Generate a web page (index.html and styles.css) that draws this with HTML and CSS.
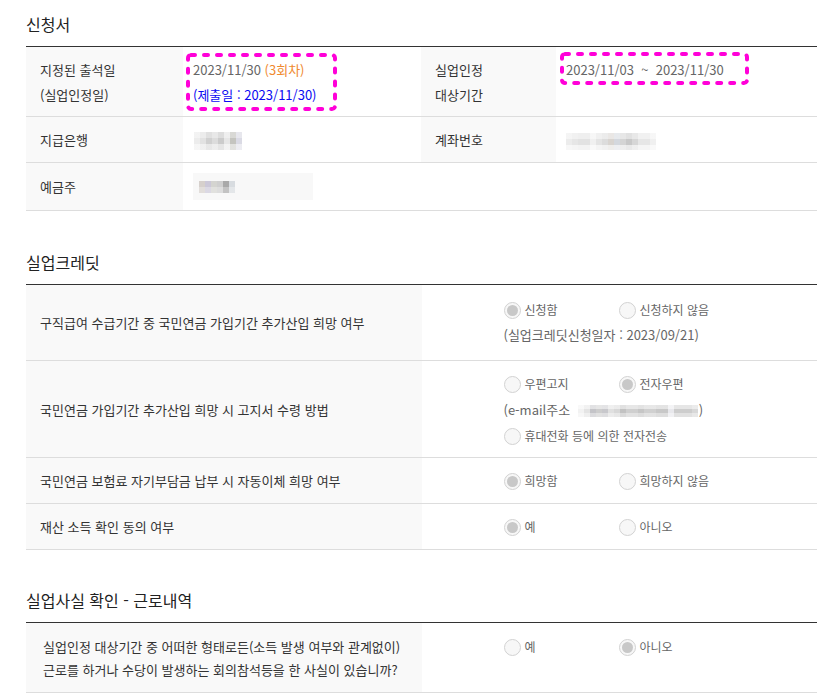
FILE: index.html
```html
<!DOCTYPE html>
<html lang="ko">
<head>
<meta charset="utf-8">
<title>신청서</title>
<link rel="stylesheet" href="styles.css">
</head>
<body>
<div class="page">
  <section class="sec">
    <h2 class="sec-title">신청서</h2>
    <table class="tbl tbl-info">
      <colgroup><col class="c-th1"><col class="c-td1"><col class="c-th2"><col class="c-td2"></colgroup>
      <tr class="row-top">
        <th>지정된 출석일<br>(실업인정일)</th>
        <td class="mark-cell">
          <div>2023/11/30 <span class="orange">(3회차)</span></div>
          <div class="blue">(제출일 : 2023/11/30)</div>
          <svg class="mark mark1" width="151" height="58" viewBox="0 0 151 58"><rect x="2" y="2" width="147" height="54" rx="3" fill="none" stroke="#ff00d8" stroke-width="4" stroke-linecap="round" stroke-dasharray="4 9"/></svg>
        </td>
        <th>실업인정<br>대상기간</th>
        <td class="mark-cell">
          <div>2023/11/03 &nbsp;~&nbsp; 2023/11/30</div>
          <svg class="mark mark2" width="189" height="33" viewBox="0 0 189 33"><rect x="2" y="2" width="185" height="29" rx="3" fill="none" stroke="#ff00d8" stroke-width="4" stroke-linecap="round" stroke-dasharray="4 9"/></svg>
        </td>
      </tr>
      <tr>
        <th>지급은행</th>
        <td><span class="mosaic mz-bank"></span></td>
        <th>계좌번호</th>
        <td><span class="mosaic mz-acct"></span></td>
      </tr>
      <tr class="row-owner">
        <th>예금주</th>
        <td colspan="3"><div class="owner-box"><span class="mosaic mz-owner"></span></div></td>
      </tr>
    </table>
  </section>

  <section class="sec">
    <h2 class="sec-title">실업크레딧</h2>
    <table class="tbl tbl-opts">
      <colgroup><col class="c-half"><col class="c-half"></colgroup>
      <tr class="row-a">
        <th>구직급여 수급기간 중 국민연금 가입기간 추가산입 희망 여부</th>
        <td>
          <div class="line"><span class="opt"><span class="radio on"></span>신청함</span><span class="opt"><span class="radio"></span>신청하지 않음</span></div>
          <div class="line">(실업크레딧신청일자 : 2023/09/21)</div>
        </td>
      </tr>
      <tr class="row-b">
        <th>국민연금 가입기간 추가산입 희망 시 고지서 수령 방법</th>
        <td>
          <div class="line"><span class="opt"><span class="radio"></span>우편고지</span><span class="opt"><span class="radio on"></span>전자우편</span></div>
          <div class="line">(e-mail주소 <span class="mosaic mz-mail"></span>)</div>
          <div class="line"><span class="opt"><span class="radio"></span>휴대전화 등에 의한 전자전송</span></div>
        </td>
      </tr>
      <tr>
        <th>국민연금 보험료 자기부담금 납부 시 자동이체 희망 여부</th>
        <td>
          <div class="line"><span class="opt"><span class="radio on"></span>희망함</span><span class="opt"><span class="radio"></span>희망하지 않음</span></div>
        </td>
      </tr>
      <tr>
        <th>재산 소득 확인 동의 여부</th>
        <td>
          <div class="line"><span class="opt"><span class="radio on"></span>예</span><span class="opt"><span class="radio"></span>아니오</span></div>
        </td>
      </tr>
    </table>
  </section>

  <section class="sec sec-last">
    <h2 class="sec-title">실업사실 확인 - 근로내역</h2>
    <table class="tbl tbl-opts tbl-work">
      <colgroup><col class="c-half"><col class="c-half"></colgroup>
      <tr>
        <th>실업인정 대상기간 중 어떠한 형태로든(소득 발생 여부와 관계없이)<br>근로를 하거나 수당이 발생하는 회의참석등을 한 사실이 있습니까?</th>
        <td>
          <div class="line"><span class="opt"><span class="radio"></span>예</span><span class="opt"><span class="radio on"></span>아니오</span></div>
        </td>
      </tr>
    </table>
  </section>
</div>
</body>
</html>
```
FILE: styles.css
```css
html, body {
  margin: 0;
  background: #fff;
}
body {
  font-family: "Noto Sans CJK KR", "Noto Sans", sans-serif;
  color: #333;
}
.page {
  padding: 0 13px 0 26px;
}
.sec-title {
  margin: 0;
  padding: 12px 0 10px;
  font-size: 16px;
  line-height: 24px;
  font-weight: 400;
  color: #222;
}
.sec + .sec {
  margin-top: 27px;
}
.sec-last {
  margin-top: 26px !important;
}
.tbl {
  width: 100%;
  border-collapse: collapse;
  table-layout: fixed;
  border-top: 1px solid #333;
}
.tbl th,
.tbl td {
  border-bottom: 1px solid #ddd;
  font-size: 13px;
  line-height: 25px;
  text-align: left;
  font-weight: 400;
}
.tbl th {
  background: #f9f9f9;
  color: #333;
  padding: 10px 14px;
  vertical-align: middle;
}
.tbl td {
  color: #666;
  padding: 10px 10px;
  vertical-align: top;
}
.tbl-info .row-top th,
.tbl-info .row-top td {
  padding-bottom: 9px;
}
.c-th1 { width: 157px; }
.c-td1 { width: 238px; }
.c-th2 { width: 135px; }
.c-td2 { width: auto; }
.c-half { width: 50%; }

.mark-cell {
  position: relative;
}
.mark {
  position: absolute;
  display: block;
}
.mark1 { left: 3px; top: 6px; }
.mark2 { left: 4px; top: 5px; }

.orange { color: #f08a30; }
.blue { color: #0a0af2; }

.mosaic {
  display: inline-block;
  vertical-align: middle;
}
.mz-bank {
  width: 48px;
  height: 18px;
  margin-left: 1px;
  background:
    linear-gradient(to bottom, rgba(255,255,255,0.35) 0 6px, rgba(255,255,255,0) 6px 12px, rgba(255,255,255,0.5) 12px),
    linear-gradient(to right, #ececec 0 6px, #e2e2e2 6px 12px, #d0d0d0 12px 18px, #dcdcdc 18px 24px, #cbcbcb 24px 30px, #e6e6e6 30px 36px, #c4c4bf 36px 42px, #dadae4 42px);
}
.mz-acct {
  width: 90px;
  height: 17px;
  background:
    linear-gradient(to bottom, rgba(255,255,255,0.45) 0 6px, rgba(255,255,255,0) 6px 12px, rgba(255,255,255,0.6) 12px),
    linear-gradient(to right, #ececec 0 6px, #e6e6e6 6px 12px, #e2e2e2 12px 24px, #f0f0f0 24px 30px, #e4e4e4 30px 36px, #dcdcdc 36px 42px, #d8d4d0 42px 48px, #d4d8de 48px 54px, #d4d4d4 54px 60px, #c8c8c8 60px 66px, #d6d6d6 66px 72px, #e6e6e6 72px 84px, #f0f0f0 84px);
}
.tbl-info .row-owner td {
  line-height: 0;
}
.owner-box {
  width: 120px;
  height: 27px;
  background: #f8f8f8;
  padding: 8px 0 0 6px;
  box-sizing: border-box;
}
.mz-owner {
  display: block;
  width: 36px;
  height: 12px;
  background:
    linear-gradient(to bottom, rgba(255,255,255,0) 0 6px, rgba(255,255,255,0.3) 6px),
    linear-gradient(to right, #d6d0cc 0 6px, #ccc8d8 6px 12px, #d4d4d0 12px 18px, #cfcfcf 18px 24px, #a9a9a9 24px 30px, #d8dce0 30px);
}
.mz-mail {
  width: 120px;
  height: 12px;
  margin: 0 1px 0 4px;
  background:
    linear-gradient(to bottom, rgba(255,255,255,0.5) 0 4px, rgba(255,255,255,0) 4px 8px, rgba(255,255,255,0.4) 8px),
    linear-gradient(to right, #f2f2f2 0 6px, #e4e4e4 6px 12px, #c4c4c8 12px 18px, #cdcdcd 18px 24px, #c8c8cc 24px 30px, #e0e0e0 30px 36px, #d8d8d8 36px 42px, #c2c2c2 42px 48px, #cfcfcf 48px 60px, #c6c6c6 60px 66px, #d0d0d0 66px 78px, #c8c8c8 78px 90px, #e8e8ec 90px 96px, #cdcdcd 96px 114px, #d8d8d8 114px);
}

.tbl-opts td {
  padding: 10px 10px 10px 82px;
  vertical-align: middle;
}
.tbl-opts .row-a td {
  padding-top: 12px;
  padding-bottom: 13px;
}
.tbl-opts .row-b td {
  padding-top: 10px;
  padding-bottom: 8px;
  line-height: 26px;
}
.line {
  white-space: nowrap;
  height: 25px;
  overflow: hidden;
}
.row-b .line {
  height: 26px;
}
.opt {
  display: inline-block;
  width: 115px;
  font-size: 12px;
  line-height: 25px;
  vertical-align: top;
}
.radio {
  display: inline-block;
  position: relative;
  width: 15px;
  height: 15px;
  border: 1px solid #d2d2d2;
  border-radius: 50%;
  background: #f7f7f7;
  vertical-align: middle;
  margin: -2px 4px 0 0;
}
.radio.on::after {
  content: "";
  position: absolute;
  left: 2px;
  top: 2px;
  width: 11px;
  height: 11px;
  border-radius: 50%;
  background: #c8c8c8;
}

.tbl-work th {
  padding: 12px 14px 11px 17px;
  line-height: 23px;
}
.tbl-work td {
  vertical-align: top;
  padding-top: 12px;
  line-height: 23px;
}
.tbl-work .line,
.tbl-work .opt {
  height: 23px;
  line-height: 23px;
}
```
